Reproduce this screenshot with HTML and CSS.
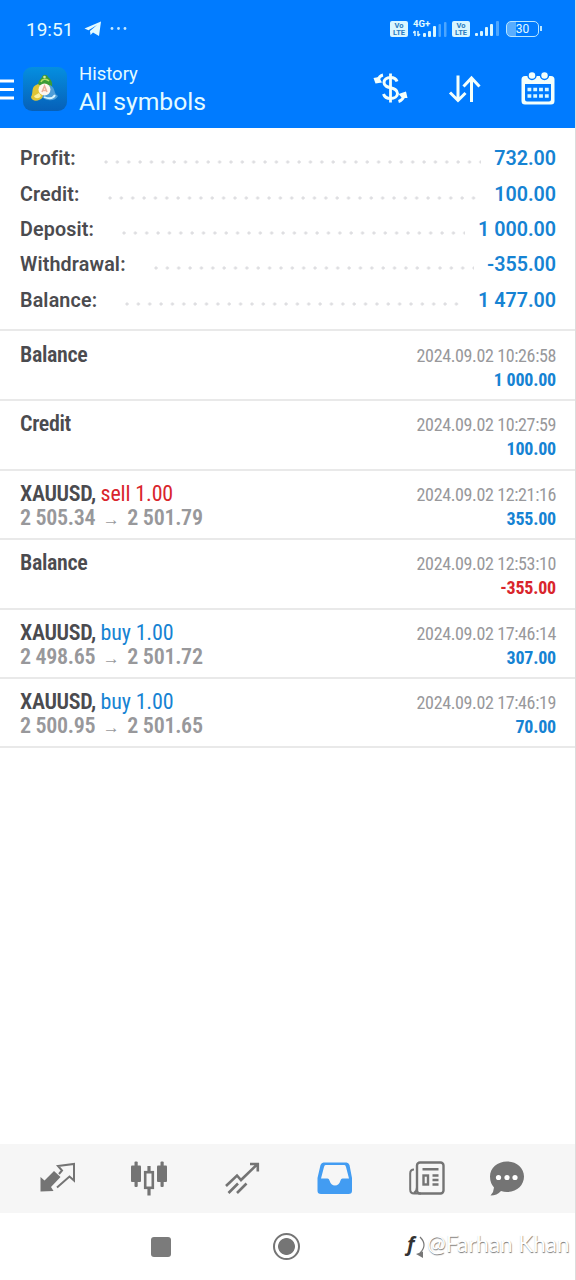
FILE: index.html
```html
<!DOCTYPE html>
<html lang="en">

<head>
  <meta charset="UTF-8" />
  <meta name="viewport" content="width=device-width, initial-scale=1.0" />
  <title>History</title>
  <link rel="stylesheet" href="styles.css">
</head>

<body>
  <div class="screen">
    <header class="header">
      <div class="statusbar">
        <span class="clock">19:51</span>
        <svg class="telegram" width="18" height="16" viewBox="0 0 18 16"><path d="M0.500 7.500 L17 0.500 L15 15 L9 11.500 L6.500 14 L6 10 L13 4 L4.500 9.300 Z" fill="#e4fbff" /></svg>
        <svg width="17" height="4" viewBox="0 0 17 4" fill="#c4e8ff"><circle cx="2" cy="1.500" r="1.400" /><circle cx="8.500" cy="1.500" r="1.400" /><circle cx="15" cy="1.500" r="1.400" /></svg>
        <div class="indicators">
          <span class="volte"><span>Vo</span><span>LTE</span></span>
          <span class="network">
            <span class="network-type">4G+</span>
            <svg width="34" height="18" viewBox="0 0 34 18" fill="#d9f6ff">
              <path d="M2 11 v5 M0 13 l2 -2 M5 11 v5 M5 16 l2 -2" fill="none" stroke="#d9f6ff" stroke-width="1.500" />
              <rect x="10" y="13" width="3" height="4" rx="1" />
              <rect x="15" y="11" width="3" height="6" rx="1" />
              <rect x="20" y="6" width="3" height="11" rx="1" />
              <rect x="25.500" y="4" width="2.500" height="13" rx="1" opacity=".35" />
              <rect x="31" y="2" width="2.500" height="15" rx="1" opacity=".35" />
            </svg>
          </span>
          <span class="volte"><span>Vo</span><span>LTE</span></span>
          <svg class="signal" width="24" height="17" viewBox="0 0 24 17" fill="#d9f6ff">
            <rect x="0" y="13" width="3" height="3" rx="1" />
            <rect x="5" y="11" width="3" height="5" rx="1" />
            <rect x="10" y="7" width="3" height="9" rx="1" />
            <rect x="15" y="4" width="3" height="12" rx="1" />
            <rect x="21" y="1" width="3" height="15" rx="1" opacity=".35" />
          </svg>
          <span class="battery">30</span>
        </div>
      </div>
      <div class="toolbar">
        <svg width="15" height="24" viewBox="0 0 15 24" stroke="#fff" stroke-width="3"><path d="M0 4 H14 M0 12.500 H14 M0 21 H14" /></svg>
        <svg class="logo" width="46" height="46" viewBox="0 0 46 46">
          <defs>
            <linearGradient id="tile" x1="0" y1="0" x2="0" y2="1">
              <stop offset="0" stop-color="#058fe0" />
              <stop offset="1" stop-color="#0660b8" />
            </linearGradient>
          </defs>
          <rect x="1" y="1" width="44" height="44" rx="9" fill="url(#tile)" />
          <path d="M16 20 C16 14 19 13 20 11 C21 8 25 8 26 11 C28 13 31 15 30 21 L23 24 Z" fill="#3c9c36" />
          <path d="M19 16 C20 13 24 12 27 15" stroke="#b7df62" stroke-width="1.500" fill="none" />
          <path d="M16 18 C8 21 12 26 9 31 C10 36 17 36 21 31 L21 22 Z" fill="#dfc436" />
          <path d="M12 30 C13 33 17 33 19 30 L17 27 Z" fill="#fbf1a1" />
          <path d="M28 19 C34 22 31 27 36 30 C34 35 25 36 20 31 L25 25 Z" fill="#4f9ed8" />
          <path d="M22 31 C27 33 31 33 33 29" stroke="#d8f5ff" stroke-width="1.800" fill="none" />
          <circle cx="22.500" cy="23.500" r="6" fill="#fff6ee" />
          <path d="M20 26 L22.500 20 L25 26 M21 24.500 H24" stroke="#edb09a" stroke-width="1.500" fill="none" />
          <circle cx="22.500" cy="11" r="1.300" fill="#d9e2a0" />
        </svg>
        <div class="titles">
          <div class="title">History</div>
          <div class="subtitle">All symbols</div>
        </div>
        <div class="actions">
          <svg width="36" height="34" viewBox="0 0 36 34" fill="none" stroke="#f3fffb" stroke-width="3">
            <path d="M17.500 1.500 V30.500" stroke-width="2.800" />
            <path d="M24 9.500 C23 6.500 20.500 5.500 17.500 5.500 C13.500 5.500 11 7.500 11 10.500 C11 18 24.500 13.500 24.500 21.500 C24.500 24.500 21.500 26.500 17.500 26.500 C14 26.500 11.500 25 10.500 22" />
            <path d="M10 3 C7.500 3.500 6 5 5 8" />
            <path d="M25.500 29.500 C29 28.500 30.500 26 31.500 23" />
            <path d="M0.500 6 L2.500 11.500 L9 10.500 L6 5 Z M25.500 22 L33 19.500 L34.500 26 L29 26 Z" fill="#f3fffb" stroke="none" />
          </svg>
          <svg width="34" height="30" viewBox="0 0 34 30" fill="none" stroke="#f3fffb" stroke-width="3">
            <path d="M10 1.500 V26 M2 18.500 L10 26.500 L17.500 19" />
            <path d="M23.500 28 V4 M15.500 12.500 L23.500 4 L31.500 12.500" />
          </svg>
          <svg class="calendar" width="34" height="35" viewBox="0 0 34 35">
            <path fill-rule="evenodd" d="M4 5 H30 Q33.500 5 33.500 8.500 V30 Q33.500 33.500 30 33.500 H4 Q0.500 33.500 0.500 30 V8.500 Q0.500 5 4 5 Z M4 13 V28.500 Q4 30.500 6 30.500 H28 Q30 30.500 30 28.500 V13 Z" fill="#f3fffb" />
            <g fill="#f3fffb" stroke="#007bff" stroke-width="1.500"><circle cx="11" cy="4.500" r="4" /><circle cx="23.500" cy="4.500" r="4" /></g>
            <path d="M6.500 18.500 H28 M6.500 25 H28" stroke="#d9f8ff" stroke-width="3.600" stroke-dasharray="3.800 2" />
          </svg>
        </div>
      </div>
    </header>

    <section class="summary">
      <div class="summary-row"><span class="label">Profit:</span><span class="dots"></span><span class="value">732.00</span></div>
      <div class="summary-row"><span class="label">Credit:</span><span class="dots"></span><span class="value">100.00</span></div>
      <div class="summary-row"><span class="label">Deposit:</span><span class="dots"></span><span class="value">1 000.00</span></div>
      <div class="summary-row"><span class="label">Withdrawal:</span><span class="dots"></span><span class="value">-355.00</span></div>
      <div class="summary-row"><span class="label">Balance:</span><span class="dots"></span><span class="value">1 477.00</span></div>
    </section>

    <main class="deals">
      <div class="deal">
        <div class="deal-info"><div class="symbol">Balance</div></div>
        <div class="deal-result"><div class="time">2024.09.02 10:26:58</div><div class="amount">1 000.00</div></div>
      </div>
      <div class="deal">
        <div class="deal-info"><div class="symbol">Credit</div></div>
        <div class="deal-result"><div class="time">2024.09.02 10:27:59</div><div class="amount">100.00</div></div>
      </div>
      <div class="deal">
        <div class="deal-info"><div class="symbol">XAUUSD, <span class="sell">sell 1.00</span></div><div class="prices">2 505.34<span class="arrow">→</span>2 501.79</div></div>
        <div class="deal-result"><div class="time">2024.09.02 12:21:16</div><div class="amount">355.00</div></div>
      </div>
      <div class="deal">
        <div class="deal-info"><div class="symbol">Balance</div></div>
        <div class="deal-result"><div class="time">2024.09.02 12:53:10</div><div class="amount loss">-355.00</div></div>
      </div>
      <div class="deal">
        <div class="deal-info"><div class="symbol">XAUUSD, <span class="buy">buy 1.00</span></div><div class="prices">2 498.65<span class="arrow">→</span>2 501.72</div></div>
        <div class="deal-result"><div class="time">2024.09.02 17:46:14</div><div class="amount">307.00</div></div>
      </div>
      <div class="deal">
        <div class="deal-info"><div class="symbol">XAUUSD, <span class="buy">buy 1.00</span></div><div class="prices">2 500.95<span class="arrow">→</span>2 501.65</div></div>
        <div class="deal-result"><div class="time">2024.09.02 17:46:19</div><div class="amount">70.00</div></div>
      </div>
    </main>

    <nav class="tabs">
      <svg width="36" height="36" viewBox="0 0 36 36">
        <path d="M0.500 16 L4.500 19.500 L14 10 L20.500 16 L11 26 L13.500 30 L0.500 30.500 Z" fill="#747474" />
        <path d="M19 13 L22 9.500 L18 5 L34 3 V19.500 L29.500 15.500 L17 26.500" fill="none" stroke="#747474" stroke-width="2" />
      </svg>
      <svg width="36" height="36" viewBox="0 0 36 36" fill="#747474">
        <rect x="0" y="4.500" width="10" height="16.500" rx="1" /><rect x="3.500" y="0.500" width="3.200" height="25.500" rx="1" />
        <rect x="26" y="4.500" width="10" height="16.500" rx="1" /><rect x="29.500" y="0.500" width="3.200" height="25.500" rx="1" />
        <path d="M18 5 V10 M18 28 V34.500" stroke="#747474" stroke-width="3.200" />
        <rect x="14.200" y="11.200" width="7.600" height="15.600" fill="none" stroke="#747474" stroke-width="2.600" />
      </svg>
      <svg width="36" height="36" viewBox="0 0 36 36" fill="none" stroke="#747474" stroke-width="2.600">
        <path d="M1 25 L12 14.500 L16 19 L32.500 3 M25 3 H32.800 V10.500" />
        <path d="M3.500 32 L13 22.500 M12 32 L21.500 22.500" />
      </svg>
      <svg width="36" height="36" viewBox="0 0 36 36">
        <path fill-rule="evenodd" d="M6.500 1.500 H29.500 Q31.500 1.500 32.500 4 L35 17 V30 Q35 33 31.500 33 H4 Q0.500 33 0.500 30 V17 L3.500 4 Q4.500 1.500 6.500 1.500 Z M8.500 4 Q7.500 4 7 6 L4 17.500 H10.500 Q12 17.500 12.500 19.500 Q14 24.500 18 24.500 Q22 24.500 23.500 19.500 Q24 17.500 25.500 17.500 H32 L29 6 Q28.500 4 27.500 4 Z" fill="#429cf2" />
      </svg>
      <svg width="36" height="36" viewBox="0 0 36 36" fill="none" stroke="#747474" stroke-width="2.400">
        <rect x="8" y="1.500" width="26.500" height="31" rx="3" />
        <path d="M5 8.500 Q1.200 8.500 1.200 12.500 V28.500 Q1.200 32.500 5 32.500 H12 M8 26.500 Q8 30.500 5 32" stroke-width="2" />
        <path d="M13.500 8.300 H29.500 M23.500 14.500 H29.500 M23.500 19 H29.500 M23.500 23.500 H29.500" />
        <rect x="14.500" y="14.500" width="4.500" height="9" />
      </svg>
      <svg width="36" height="36" viewBox="0 0 36 36">
        <path d="M18 0.500 C27.500 0.500 35 7 35 15.500 C35 24 28 31 18 31 Q15 31 12 30 Q8 34.500 1.500 34.500 Q5 30.500 5 26.500 Q1 22 1 15.500 C1 7 8.500 0.500 18 0.500 Z" fill="#747474" />
        <g fill="#fff"><circle cx="9.500" cy="16.500" r="2.600" /><circle cx="18" cy="16.500" r="2.600" /><circle cx="26" cy="16.500" r="2.600" /></g>
      </svg>
    </nav>

    <footer class="system-nav">
      <span class="recents"></span>
      <span class="home"></span>
      <span class="watermark">
        <span class="mark">f</span>
        <svg class="mark-ring" width="12" height="24" viewBox="0 0 12 24"><path d="M5 2 Q13 10 5 18" fill="none" stroke="#777" stroke-width="1.200" /><path d="M1 19 L8 16.500 L8 23 Z" fill="#777" /></svg>
        <span>@Farhan Khan</span>
      </span>
    </footer>
  </div>
</body>

</html>
```

FILE: styles.css
```css
* {
  box-sizing: border-box;
}

body {
  margin: 0;
  font-family: Roboto, sans-serif;
  background-color: #fff;
}

svg {
  display: block;
  flex: none;
}

.screen {
  display: flex;
  flex-direction: column;
  width: 576px;
  height: 1280px;
  overflow: hidden;
  border-right: 1px solid #dcdcdc;
}

/* Header */
.header {
  height: 128px;
  margin-right: -1px;
  background-color: #007bff;
  color: #e4fbff;
}

.statusbar {
  display: flex;
  align-items: center;
  height: 57px;
  padding: 0 34px 0 26px;
}

.clock {
  width: 48px;
  padding-top: 1px;
  font-size: 19px;
}

.telegram {
  margin: 0 8px 0 10px;
}

.indicators {
  display: flex;
  align-items: center;
  margin-left: auto;
}

.volte {
  display: flex;
  flex-direction: column;
  width: 18px;
  height: 16px;
  padding: 1px;
  border-radius: 2px;
  background-color: #d9f6ff;
  color: #287bc0;
  font-size: 7.5px;
  font-weight: 700;
  line-height: 7px;
  text-align: center;
}

.network {
  position: relative;
  margin: 0 5px 0 5px;
}

.network-type {
  position: absolute;
  left: 0;
  top: -1px;
  font-size: 9.5px;
  font-weight: 700;
  line-height: 9px;
}

.signal {
  margin: 0 7px 0 5px;
}

.battery {
  position: relative;
  width: 33px;
  height: 16px;
  margin-right: 3px;
  border: 1.5px solid #b9e6ff;
  border-radius: 5px;
  background: linear-gradient(90deg, #58adff 9px, transparent 9px);
  font-size: 12px;
  line-height: 15px;
  text-align: center;
}

.battery::after {
  content: "";
  position: absolute;
  right: -4px;
  top: 4px;
  width: 2px;
  height: 5px;
  background-color: #b9e6ff;
}

.toolbar {
  display: flex;
  align-items: center;
  height: 64px;
  padding-right: 21px;
}

.logo {
  margin-left: 7px;
}

.titles {
  padding-top: 1px;
  margin-left: 11px;
}

.title {
  font-size: 18.5px;
  line-height: 24px;
}

.subtitle {
  font-size: 24.7px;
  line-height: 32px;
}

.actions {
  display: flex;
  align-items: center;
  gap: 39px;
  margin-left: auto;
}

.calendar {
  margin-top: -2px;
}

/* Account summary */
.summary {
  height: 203px;
  padding: 13px 19px 0 20px;
  border-bottom: 2px solid #e9e9e9;
}

.summary-row {
  display: flex;
  align-items: center;
  height: 35.4px;
  font-size: 19.7px;
  font-weight: 600;
}

.label {
  color: #4b4b4f;
  letter-spacing: 0.15px;
}

.value {
  color: #1683d3;
}

.dots {
  flex: 1;
  height: 4px;
  margin: 7px 13px 0 28px;
  background: radial-gradient(circle at 2px 2px, #dedee1 1.2px, transparent 2px) 0 0 / 11.36px 4px repeat-x;
}

/* Deals */
.deals {
  flex: 1;
  padding-top: 1px;
}

.deal {
  display: flex;
  justify-content: space-between;
  height: 69.4px;
  padding: 11px 19px 0 20px;
  border-bottom: 2px solid #e9e9e9;
  font-family: "Roboto Condensed", Roboto, sans-serif;
  font-stretch: 75%;
}

.symbol {
  color: #4b4b4f;
  font-size: 22px;
  font-weight: 600;
  letter-spacing: -0.35px;
  line-height: 24px;
}

.symbol span {
  font-weight: 400;
  letter-spacing: -0.15px;
}

.prices {
  color: #98989b;
  font-size: 22px;
  font-weight: 600;
  letter-spacing: -0.3px;
  line-height: 24px;
}

.arrow {
  display: inline-block;
  width: 32px;
  font-family: "Liberation Sans", sans-serif;
  font-size: 17px;
  font-weight: 400;
  letter-spacing: 0;
  line-height: 20px;
  text-align: center;
}

.deal-result {
  padding-top: 1px;
  text-align: right;
}

.time {
  color: #98989b;
  font-size: 18px;
  letter-spacing: -0.37px;
  line-height: 24px;
}

.amount {
  color: #1683d3;
  font-size: 18px;
  font-weight: 700;
  letter-spacing: -0.2px;
  line-height: 24px;
}

.buy {
  color: #1683d3;
}

.sell,
.loss {
  color: #d9252c;
}

/* Bottom tabs */
.tabs {
  display: grid;
  grid-template-columns: 91px 94px 92px 92px 80px 36px;
  align-items: center;
  height: 69px;
  padding-left: 40px;
  background-color: #f6f6f6;
}

.system-nav {
  display: flex;
  align-items: center;
  height: 67px;
  padding-left: 151px;
}

.recents {
  width: 20px;
  height: 20px;
  border-radius: 3px;
  background-color: #7b7b7b;
}

.home {
  width: 27px;
  height: 27px;
  margin-left: 102px;
  border: 2px solid #757575;
  border-radius: 50%;
  background: radial-gradient(circle, #757575 8px, #fff 8.8px);
}

.watermark {
  display: flex;
  align-items: center;
  margin: -7px 0 0 107px;
  color: #fff;
  font-family: Lato, sans-serif;
  font-size: 22.5px;
  white-space: nowrap;
  text-shadow: 0.5px 0.5px 1px #777;
}

.mark {
  width: 9px;
  color: #333;
  font-family: "Open Sans", sans-serif;
  font-size: 20px;
  font-style: italic;
  font-weight: 700;
  text-shadow: none;
}

.mark-ring {
  margin-top: 7px;
  margin-left: -1px;
}
```
